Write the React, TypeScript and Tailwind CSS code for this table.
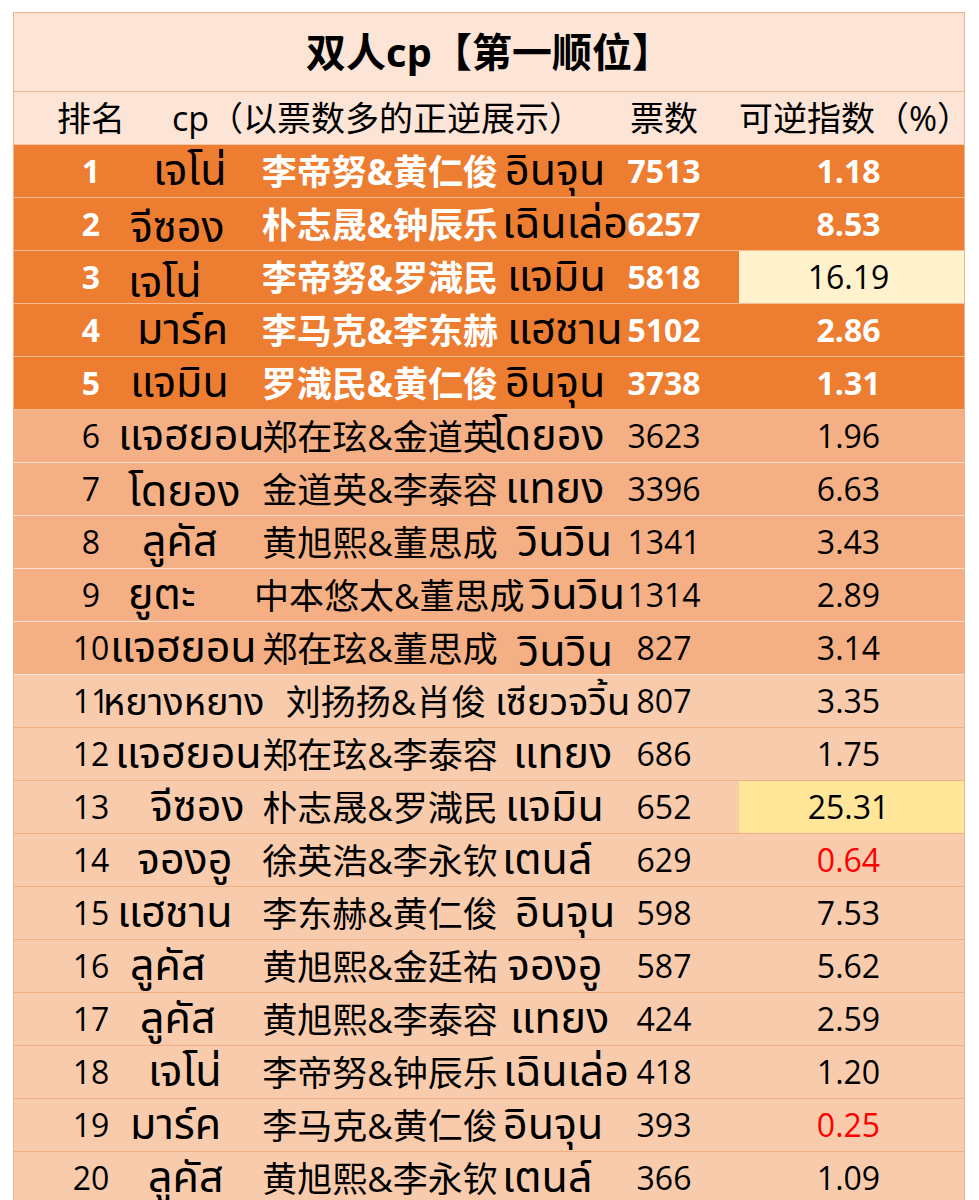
import React from "react";

type Row = {
  rank: number;
  th1: string;
  th1Cls: string;
  cn: string;
  cnCls?: string;
  th2: string;
  th2Cls: string;
  votes: string;
  idx: string;
  cellCls?: string;
  idxCls?: string;
};

const rows: Row[] = [
  { rank: 1, th1: "เจโน่", th1Cls: "ml-[37px]", cn: "李帝努&黄仁俊", th2: "อินจุน", th2Cls: "ml-[-1px]", votes: "7513", idx: "1.18" },
  { rank: 2, th1: "จีซอง", th1Cls: "ml-[14px] translate-y-[4px]", cn: "朴志晟&钟辰乐", th2: "เฉินเล่อ", th2Cls: "ml-[-4px]", votes: "6257", idx: "8.53" },
  { rank: 3, th1: "เจโน่", th1Cls: "ml-[12px] translate-y-[6px]", cn: "李帝努&罗渽民", th2: "แจมิน", th2Cls: "ml-[1px]", votes: "5818", idx: "16.19", cellCls: "bg-[#FFF2CC]", idxCls: "text-black font-normal" },
  { rank: 4, th1: "มาร์ค", th1Cls: "ml-[21px]", cn: "李马克&李东赫", th2: "แฮชาน", th2Cls: "ml-[1px]", votes: "5102", idx: "2.86" },
  { rank: 5, th1: "แจมิน", th1Cls: "ml-[14px]", cn: "罗渽民&黄仁俊", th2: "อินจุน", th2Cls: "ml-[-1px]", votes: "3738", idx: "1.31" },
  { rank: 6, th1: "แจฮยอน", th1Cls: "ml-[2px]", cn: "郑在玹&金道英", th2: "โดยอง", th2Cls: "ml-[-14px]", votes: "3623", idx: "1.96" },
  { rank: 7, th1: "โดยอง", th1Cls: "ml-[12px] translate-y-[3px]", cn: "金道英&李泰容", th2: "แทยง", th2Cls: "ml-[-1px]", votes: "3396", idx: "6.63" },
  { rank: 8, th1: "ลูคัส", th1Cls: "ml-[26px]", cn: "黄旭熙&董思成", th2: "วินวิน", th2Cls: "ml-[11px]", votes: "1341", idx: "3.43" },
  { rank: 9, th1: "ยูตะ", th1Cls: "ml-[12px]", cn: "中本悠太&董思成", th2: "วินวิน", th2Cls: "ml-[24px]", votes: "1314", idx: "2.89" },
  { rank: 10, th1: "แจฮยอน", th1Cls: "ml-[-6px]", cn: "郑在玹&董思成", th2: "วินวิน", th2Cls: "ml-[12px] translate-y-[4px]", votes: "827", idx: "3.14" },
  { rank: 11, th1: "หยางหยาง", th1Cls: "ml-[-13px] text-[38px]", cn: "刘扬扬&肖俊", cnCls: "pl-[12px]", th2: "เซียวจวิ้น", th2Cls: "ml-[-11px] text-[38px]", votes: "807", idx: "3.35" },
  { rank: 12, th1: "แจฮยอน", th1Cls: "ml-[-1px]", cn: "郑在玹&李泰容", th2: "แทยง", th2Cls: "ml-[7px]", votes: "686", idx: "1.75" },
  { rank: 13, th1: "จีซอง", th1Cls: "ml-[34px]", cn: "朴志晟&罗渽民", th2: "แจมิน", th2Cls: "ml-[-1px]", votes: "652", idx: "25.31", cellCls: "bg-[#FFE699]" },
  { rank: 14, th1: "จองอู", th1Cls: "ml-[21px]", cn: "徐英浩&李永钦", th2: "เตนล์", th2Cls: "ml-[-4px]", votes: "629", idx: "0.64", idxCls: "text-[#FF0000]" },
  { rank: 15, th1: "แฮชาน", th1Cls: "ml-[1px]", cn: "李东赫&黄仁俊", th2: "อินจุน", th2Cls: "ml-[9px]", votes: "598", idx: "7.53" },
  { rank: 16, th1: "ลูคัส", th1Cls: "ml-[14px]", cn: "黄旭熙&金廷祐", th2: "จองอู", th2Cls: "ml-[1px]", votes: "587", idx: "5.62" },
  { rank: 17, th1: "ลูคัส", th1Cls: "ml-[24px]", cn: "黄旭熙&李泰容", th2: "แทยง", th2Cls: "ml-[4px]", votes: "424", idx: "2.59" },
  { rank: 18, th1: "เจโน่", th1Cls: "ml-[32px]", cn: "李帝努&钟辰乐", th2: "เฉินเล่อ", th2Cls: "ml-[-3px]", votes: "418", idx: "1.20" },
  { rank: 19, th1: "มาร์ค", th1Cls: "ml-[14px]", cn: "李马克&黄仁俊", th2: "อินจุน", th2Cls: "ml-[-3px]", votes: "393", idx: "0.25", idxCls: "text-[#FF0000]" },
  { rank: 20, th1: "ลูคัส", th1Cls: "ml-[32px]", cn: "黄旭熙&李永钦", th2: "เตนล์", th2Cls: "ml-[-4px]", votes: "366", idx: "1.09" },
];

function rowBg(rank: number) {
  if (rank <= 5) return "bg-[#ED7D31] border-[#F6BC94] text-white font-bold";
  if (rank <= 10) return "bg-[#F4B084] border-[#FBE2D2] text-black";
  return "bg-[#F8CBAD] border-[#F2AE82] text-black";
}

const thai = "font-['Noto_Sans_Thai','Noto_Sans','DejaVu_Sans',sans-serif] text-[43px] font-normal leading-none text-black";

function DataRow({ r }: { r: Row }) {
  return (
    <div className={`flex h-[53px] items-center border-b ${rowBg(r.rank)}`}>
      <div className="w-[102px] shrink-0 pl-[52px] text-center text-[32px] leading-none">
        <span className="inline-block w-[50px] whitespace-nowrap">{r.rank}</span>
      </div>
      <div className={`w-[138px] shrink-0 whitespace-nowrap ${thai}`}>
        <span className={`inline-block ${r.th1Cls}`}>{r.th1}</span>
      </div>
      <div className={`w-[252px] shrink-0 whitespace-nowrap text-center text-[35px] leading-none ${r.cnCls ?? ""}`}>
        {r.cn}
      </div>
      <div className={`w-[114px] shrink-0 whitespace-nowrap ${thai}`}>
        <span className={`inline-block ${r.th2Cls}`}>{r.th2}</span>
      </div>
      <div className="w-[88px] shrink-0 text-center text-[32px] leading-none">{r.votes}</div>
      <div className="w-[31px] shrink-0" />
      <div className={`flex h-full flex-1 items-center justify-center pr-[6px] text-[32px] leading-none ${r.cellCls ?? ""} ${r.idxCls ?? ""}`}>
        {r.idx}
      </div>
    </div>
  );
}

export default function App() {
  return (
    <div className="h-[1200px] w-[979px] overflow-hidden bg-white pl-[13px] pt-[12px] font-['Open_Sans','Noto_Sans_CJK_SC',sans-serif]">
      <div className="w-[952px] border border-[#F1B488]">
        <div className="flex h-[79px] items-center justify-center border-b border-[#F1B488] bg-[#FCE4D6] text-[40px] font-bold text-black">
          双人cp【第一顺位】
        </div>
        <div className="flex h-[53px] items-center border-b border-[#F6C7A6] bg-[#FCE4D6] text-[34px] leading-none text-black">
          <div className="w-[154px] shrink-0 text-center">排名</div>
          <div className="w-[452px] shrink-0 whitespace-nowrap pl-[4px]">cp（以票数多的正逆展示）</div>
          <div className="w-[88px] shrink-0 text-center">票数</div>
          <div className="w-[31px] shrink-0" />
          <div className="flex-1 whitespace-nowrap pr-[4px] text-center">可逆指数（%）</div>
        </div>
        {rows.map((r) => (
          <DataRow key={r.rank} r={r} />
        ))}
      </div>
    </div>
  );
}
